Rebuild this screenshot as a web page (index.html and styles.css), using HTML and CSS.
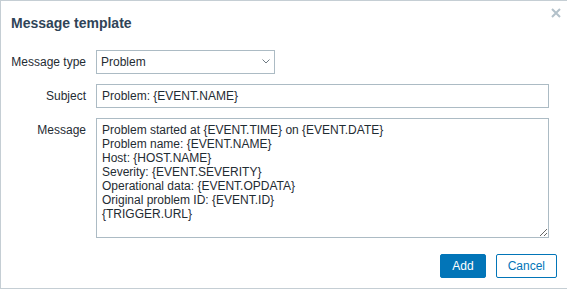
FILE: index.html
```html
<!DOCTYPE html>
<html lang="en">
<head>
    <meta charset="UTF-8">
    <meta name="viewport" content="width=device-width, initial-scale=1.0">
    <title>Message template</title>
    <link rel="stylesheet" href="styles.css">
</head>
<body>
    <div class="dialog">
        <div class="dialog-head">
            <h4>Message template</h4>
            <button class="btn-close" title="Close">
                <svg width="10" height="10" viewBox="0 0 10 10">
                    <path d="M1 1L9 9M9 1L1 9" stroke="#b3c1ca" stroke-width="2" fill="none"/>
                </svg>
            </button>
        </div>
        <form class="form-list">
            <label for="messageType">Message type</label>
            <div class="select-wrap">
                <select id="messageType">
                    <option>Problem</option>
                    <option>Problem recovery</option>
                    <option>Problem update</option>
                </select>
                <svg class="chevron" width="8" height="5" viewBox="0 0 8 5">
                    <path d="M0.5 0.5L4 4L7.5 0.5" stroke="#6e7a83" stroke-width="1" fill="none"/>
                </svg>
            </div>

            <label for="subject">Subject</label>
            <input type="text" id="subject" class="input-wide" value="Problem: {EVENT.NAME}">

            <label for="message">Message</label>
            <textarea id="message" class="input-wide">Problem started at {EVENT.TIME} on {EVENT.DATE}
Problem name: {EVENT.NAME}
Host: {HOST.NAME}
Severity: {EVENT.SEVERITY}
Operational data: {EVENT.OPDATA}
Original problem ID: {EVENT.ID}
{TRIGGER.URL}</textarea>
        </form>
        <div class="dialog-foot">
            <button class="btn btn-primary">Add</button>
            <button class="btn btn-alt">Cancel</button>
        </div>
    </div>
</body>
</html>
```

FILE: styles.css
```css
body {
    margin: 0;
    font-family: "Liberation Sans", Arial, sans-serif;
    font-size: 12px;
    color: #1f2c33;
    background-color: #fff;
}
.dialog {
    width: 567px;
    box-sizing: border-box;
    border: 1px solid #c5ced4;
    border-right: none;
    background-color: #fff;
}
.dialog-head {
    display: flex;
    justify-content: space-between;
    align-items: flex-start;
    padding: 0 6px 0 10px;
    height: 49px;
}
.dialog-head h4 {
    margin: 14px 0 0;
    font-size: 14px;
    line-height: 16px;
    font-weight: bold;
    color: #2f4458;
}
.btn-close {
    margin-top: 7px;
    padding: 0;
    width: 10px;
    height: 10px;
    border: none;
    background: none;
    cursor: pointer;
    line-height: 0;
}
.form-list {
    display: grid;
    grid-template-columns: 75px auto;
    column-gap: 10px;
    row-gap: 10px;
    padding: 0 10px;
    margin: 0;
    align-items: start;
}
.form-list label {
    text-align: right;
    line-height: 24px;
    white-space: nowrap;
}
.select-wrap {
    position: relative;
    width: 179px;
}
.select-wrap select {
    appearance: none;
    -webkit-appearance: none;
    width: 100%;
    height: 24px;
    box-sizing: border-box;
    margin: 0;
    padding: 0 20px 0 4px;
    border: 1px solid #acbbc4;
    border-radius: 0;
    background-color: #fff;
    font-family: inherit;
    font-size: 12px;
    color: #1f2c33;
    outline: none;
}
.chevron {
    position: absolute;
    right: 5px;
    top: 9px;
    pointer-events: none;
}
.input-wide {
    width: 453px;
    box-sizing: border-box;
    margin: 0;
    border: 1px solid #acbbc4;
    border-radius: 0;
    font-family: inherit;
    font-size: 12px;
    color: #1f2c33;
    outline: none;
}
input.input-wide {
    height: 24px;
    padding: 0 5px;
}
textarea.input-wide {
    display: block;
    height: 120px;
    padding: 4px 5px;
    line-height: 14px;
    resize: both;
}
.dialog-foot {
    display: flex;
    justify-content: flex-end;
    gap: 10px;
    padding: 16px 10px 10px;
}
.btn {
    height: 24px;
    padding: 0 11px;
    border: 1px solid #0275b8;
    border-radius: 2px;
    font-family: inherit;
    font-size: 12px;
    cursor: pointer;
}
.btn-primary {
    background-color: #0275b8;
    color: #fff;
}
.btn-alt {
    background-color: #fff;
    color: #0275b8;
}
```
